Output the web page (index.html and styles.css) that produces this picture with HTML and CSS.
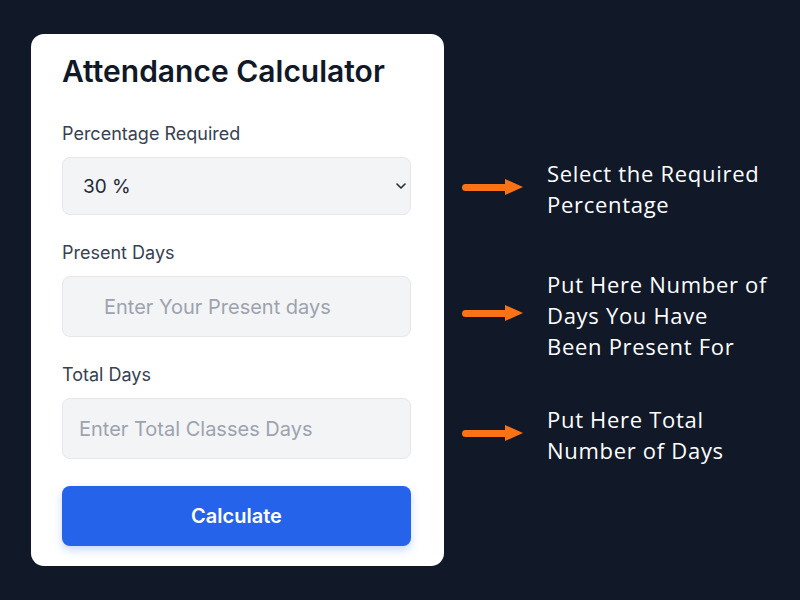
FILE: index.html
```html
<!DOCTYPE html>
<html lang="en">

<head>
    <meta charset="UTF-8">
    <meta name="viewport" content="width=device-width, initial-scale=1.0">
    <title>Attendance Calculator</title>
    <link rel="stylesheet" href="styles.css">
</head>

<body>

    <div class="page">
        <div class="card">
            <h1>Attendance Calculator</h1>

            <label class="label" for="percentage">Percentage Required</label>
            <div class="select-wrap">
                <select id="percentage" class="field select">
                    <option>30 %</option>
                    <option>40 %</option>
                    <option>50 %</option>
                    <option>60 %</option>
                    <option>75 %</option>
                </select>
                <svg class="chevron" width="10" height="6" viewBox="0 0 10 6">
                    <path d="M1 1l4 4 4-4" fill="none" stroke="#1f2937" stroke-width="1.6" stroke-linecap="round" stroke-linejoin="round" />
                </svg>
            </div>

            <label class="label" for="present">Present Days</label>
            <input type="number" id="present" class="field present" placeholder="Enter Your Present days">

            <label class="label" for="total">Total Days</label>
            <input type="number" id="total" class="field" placeholder="Enter Total Classes Days">

            <button class="calc">Calculate</button>
        </div>

        <div class="notes">
            <div class="note note-1">
                <span class="arrow"></span>
                <p>Select the Required<br>Percentage</p>
            </div>
            <div class="note note-2">
                <span class="arrow"></span>
                <p>Put Here Number of<br>Days You Have<br>Been Present For</p>
            </div>
            <div class="note note-3">
                <span class="arrow"></span>
                <p>Put Here Total<br>Number of Days</p>
            </div>
        </div>
    </div>

</body>

</html>
```

FILE: styles.css
```css
body {
    margin: 0;
    padding: 0;
    background-color: #111827;
    font-family: Inter, "Liberation Sans", sans-serif;
    height: 100vh;
}

.page {
    display: flex;
    padding: 34px 0 0 31px;
}

.card {
    width: 413px;
    box-sizing: border-box;
    background-color: white;
    border-radius: 13px;
    padding: 20px 33px 20px 31px;
    display: flex;
    flex-direction: column;
}

h1 {
    margin: 0 0 35px 0;
    font-size: 30px;
    font-weight: 600;
    color: #111827;
    line-height: 34px;
}

.label {
    font-size: 18px;
    color: #374151;
    line-height: 22px;
    margin-bottom: 12px;
}

.field {
    width: 100%;
    box-sizing: border-box;
    height: 61px;
    border: 1px solid #e5e7eb;
    border-radius: 8px;
    background-color: #f3f4f6;
    padding: 0 16px;
    font-family: Inter, "Liberation Sans", sans-serif;
    font-size: 20px;
    color: #1f2937;
    outline: none;
    margin-bottom: 27px;
}

.field::placeholder {
    color: #9ca3af;
}

.present {
    padding-left: 41px;
}

.select-wrap {
    position: relative;
}

.select {
    appearance: none;
    -webkit-appearance: none;
    height: 58px;
    padding-left: 20px;
    font-size: 19px;
}

.chevron {
    position: absolute;
    right: 5px;
    top: 26px;
}

.calc {
    height: 60px;
    border: none;
    border-radius: 8px;
    background-color: #2563eb;
    color: white;
    font-family: Inter, "Liberation Sans", sans-serif;
    font-size: 20px;
    font-weight: 600;
    cursor: pointer;
    box-shadow: 0 4px 8px rgba(37, 99, 235, 0.25);
}

.calc:hover {
    background-color: #1d4ed8;
}

.notes {
    display: flex;
    flex-direction: column;
    padding-left: 18px;
}

.note {
    display: flex;
    align-items: center;
}

.note p {
    margin: 0;
    font-family: "Open Sans", "Liberation Sans", sans-serif;
    font-size: 22px;
    line-height: 31px;
    color: white;
    letter-spacing: 0.7px;
}

.note-1 {
    margin-top: 124px;
}

.note-2 {
    margin-top: 49px;
}

.note-3 {
    margin-top: 42px;
}

.arrow {
    position: relative;
    width: 61px;
    height: 17px;
    margin-right: 24px;
    margin-top: -4px;
}

.arrow::before {
    content: "";
    position: absolute;
    left: 0;
    top: 5px;
    width: 48px;
    height: 7px;
    border-radius: 4px;
    background-color: #f97316;
}

.arrow::after {
    content: "";
    position: absolute;
    right: 0;
    top: 0;
    border-left: 18px solid #f97316;
    border-top: 8.5px solid transparent;
    border-bottom: 8.5px solid transparent;
}
```
